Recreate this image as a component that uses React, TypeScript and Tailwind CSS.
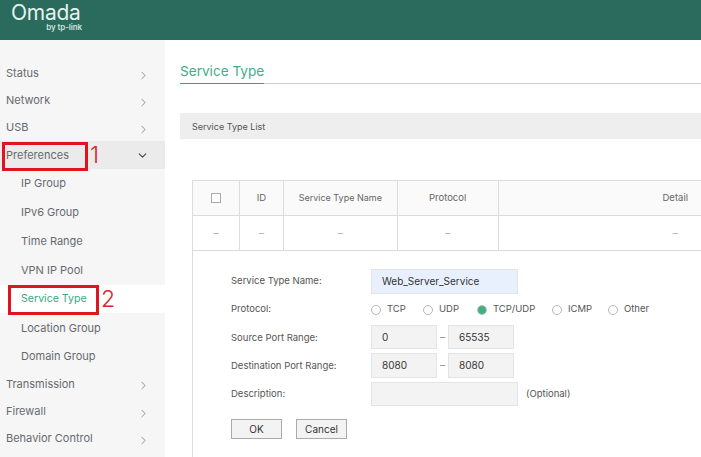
import React from "react";
import { ChevronRight, ChevronDown } from "lucide-react";

const font = "font-['Inter','Noto_Sans',sans-serif]";

function Top({ label, h, open }: { label: string; h: string; open?: boolean }) {
  return (
    <div className={`flex items-center justify-between pl-[6px] pr-[15px] text-[11px] text-[#666a70] ${h} ${open ? "bg-[#ebebeb]" : ""}`}>
      <span>{label}</span>
      {open ? (
        <ChevronDown size={13} strokeWidth={2} className="text-[#444] mr-[1px]" />
      ) : (
        <ChevronRight size={13} strokeWidth={1.8} className="text-[#8f8f8f] mt-[3px]" />
      )}
    </div>
  );
}

function Sub({ label, h, active }: { label: string; h: string; active?: boolean }) {
  return (
    <div className={`flex items-center pl-[21px] ${h} ${active ? "bg-white text-[#3aa981] text-[10.6px]" : "text-[#666a70] text-[11px]"}`}>
      {label}
    </div>
  );
}

function Radio({ label, checked, w }: { label: string; checked?: boolean; w: string }) {
  return (
    <div className={`flex items-center gap-[6px] ${w}`}>
      <span className="w-[10px] h-[10px] rounded-full border border-[#b8b8b8] flex items-center justify-center">
        {checked && <span className="w-[8px] h-[8px] rounded-full bg-[#3fae80] block shrink-0" />}
      </span>
      <span className="text-[9.5px] text-[#555]">{label}</span>
    </div>
  );
}

function Row({ label, h, low, children }: { label: string; h: string; low?: boolean; children: React.ReactNode }) {
  return (
    <div className={`flex items-center ${h}`}>
      <div className={`w-[140px] text-[9.5px] text-[#555] ${low ? "pt-[2px]" : ""}`}>{label}</div>
      {children}
    </div>
  );
}

function Field({ value, w, h, blue }: { value?: string; w: string; h: string; blue?: boolean }) {
  return (
    <div className={`flex items-center pl-[10px] text-[10px] text-[#333] border border-[#e4e4e4] ${w} ${h} ${blue ? "bg-[#e9f0fd]" : "bg-[#f3f3f3]"}`}>
      {value}
    </div>
  );
}

function Cell({ children, w, border = true, className = "" }: { children: React.ReactNode; w: string; border?: boolean; className?: string }) {
  return (
    <div className={`flex items-center justify-center ${w} ${border ? "border-r border-[#dcdcdc]" : ""} ${className}`}>
      {children}
    </div>
  );
}

export default function App() {
  return (
    <div className={`relative w-[701px] h-[457px] overflow-hidden bg-white ${font}`}>
      <header className="h-[40px] bg-[#2a6b5d] pl-[11px] pt-[3px] text-white">
        <div className="w-[71px]">
          <div className="text-[21px] leading-[20px] font-normal text-[#e4f2ee] tracking-[-0.25px]">Omada</div>
          <div className="text-[8px] leading-[8px] text-right font-semibold text-[#cfe3dd] tracking-[-0.1px]">by tp-link</div>
        </div>
      </header>
      <div className="flex h-[417px]">
        <aside className="w-[165px] shrink-0 bg-[#f6f6f6] pt-[20px]">
          <Top label="Status" h="h-[27px]" />
          <Top label="Network" h="h-[27px]" />
          <Top label="USB" h="h-[27px]" />
          <Top label="Preferences" h="h-[28px]" open />
          <Sub label="IP Group" h="h-[29px]" />
          <Sub label="IPv6 Group" h="h-[29px]" />
          <Sub label="Time Range" h="h-[29px]" />
          <Sub label="VPN IP Pool" h="h-[29px]" />
          <Sub label="Service Type" h="h-[28px]" active />
          <Sub label="Location Group" h="h-[30px]" />
          <Sub label="Domain Group" h="h-[27px]" />
          <Top label="Transmission" h="h-[28px]" />
          <Top label="Firewall" h="h-[27px]" />
          <Top label="Behavior Control" h="h-[27px]" />
        </aside>
        <main className="w-[687px] shrink-0 pl-[15px] pt-[22px]">
          <div className="border-b border-[#cfcfcf] h-[22px]">
            <div className="w-[84px] h-[22px] border-b border-[#3f9f7c] text-[13.6px] leading-[18px] text-[#45ad88] whitespace-nowrap">
              Service Type
            </div>
          </div>
          <div className="mt-[29px] h-[26px] bg-[#eeeeee] flex items-center pl-[12px] pt-[1px] text-[9px] text-[#555]">
            Service Type List
          </div>
          <div className="ml-[12px] mt-[41px] w-[660px] border-l border-t border-[#dcdcdc]">
            <div className="flex h-[35px] bg-[#fafafa] border-b border-[#dcdcdc] text-[#666] text-[9.5px]">
              <Cell w="w-[47px]">
                <span className="w-[10px] h-[10px] border border-[#aaa] bg-white block" />
              </Cell>
              <Cell w="w-[44px]">ID</Cell>
              <Cell w="w-[114px]" className="text-[9px]">Service Type Name</Cell>
              <Cell w="w-[101px]">Protocol</Cell>
              <Cell w="w-[354px]" border={false}>Detail</Cell>
            </div>
            <div className="flex h-[35px] border-b border-[#dcdcdc] text-[#aaa] text-[10px]">
              <Cell w="w-[47px]">–</Cell>
              <Cell w="w-[44px]">–</Cell>
              <Cell w="w-[114px]">–</Cell>
              <Cell w="w-[101px]">–</Cell>
              <Cell w="w-[354px]" border={false}>–</Cell>
            </div>
            <div className="pl-[38px] pt-[17px] h-[210px]">
              <Row label="Service Type Name:" h="h-[26px]">
                <Field value="Web_Server_Service" w="w-[147px]" h="h-[25px]" blue />
              </Row>
              <Row label="Protocol:" h="h-[29px]" low>
                <div className="flex items-center pt-[2px]">
                  <Radio label="TCP" w="w-[52px]" />
                  <Radio label="UDP" w="w-[54px]" />
                  <Radio label="TCP/UDP" w="w-[75px]" checked />
                  <Radio label="ICMP" w="w-[56px]" />
                  <Radio label="Other" w="w-[60px]" />
                </div>
              </Row>
              <Row label="Source Port Range:" h="h-[28px]" low>
                <Field value="0" w="w-[66px]" h="h-[24px]" />
                <span className="w-[11px] text-center text-[10px] text-[#888]">–</span>
                <Field value="65535" w="w-[66px]" h="h-[24px]" />
              </Row>
              <Row label="Destination Port Range:" h="h-[29px]" low>
                <Field value="8080" w="w-[66px]" h="h-[25px]" />
                <span className="w-[11px] text-center text-[10px] text-[#888]">–</span>
                <Field value="8080" w="w-[66px]" h="h-[25px]" />
              </Row>
              <Row label="Description:" h="h-[28px]">
                <Field w="w-[147px]" h="h-[24px]" />
                <span className="ml-[8px] text-[9.5px] text-[#555]">(Optional)</span>
              </Row>
              <div className="flex gap-[14px] mt-[11px]">
                <div className="w-[51px] h-[20px] border border-[#aaa] bg-[#f3f3f3] flex items-center justify-center text-[10px] text-[#333]">OK</div>
                <div className="w-[51px] h-[20px] border border-[#aaa] bg-[#f3f3f3] flex items-center justify-center text-[10px] text-[#333]">Cancel</div>
              </div>
            </div>
          </div>
        </main>
      </div>
      <div className="absolute left-[2px] top-[142px] w-[86px] h-[29px] border-[3px] border-[#e0141e]" />
      <div className="absolute left-[90px] top-[142px] text-[23px] leading-[26px] font-light text-[#d9252c]">1</div>
      <div className="absolute left-[8px] top-[285px] w-[91px] h-[30px] border-[3px] border-[#e0141e]" />
      <div className="absolute left-[101px] top-[286px] text-[23px] leading-[26px] font-light text-[#d9252c]">2</div>
    </div>
  );
}
